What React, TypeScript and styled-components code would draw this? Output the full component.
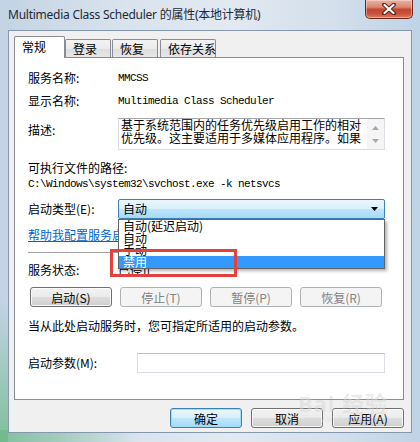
import React from 'react';
import styled, { createGlobalStyle, css } from 'styled-components';

const UI = `"Noto Sans CJK SC", "Noto Sans", sans-serif`;
const LATIN = `"Noto Sans", "Noto Sans CJK SC", sans-serif`;
const MONO = `"Liberation Mono", "Noto Sans CJK SC", monospace`;

const Global = createGlobalStyle`
  html, body { margin: 0; padding: 0; background: #fff; }
  body { width: 420px; height: 442px; overflow: hidden; }
  * { box-sizing: border-box; }
`;

const Window = styled.div`
  position: relative;
  width: 420px;
  height: 442px;
  display: flex;
  flex-direction: column;
  padding-bottom: 9px;
  background:
    linear-gradient(90deg, rgba(110, 185, 135, 0.75) 0px, rgba(110, 185, 135, 0) 140px) bottom / 100% 12px no-repeat,
    linear-gradient(180deg, rgba(110, 185, 135, 0) 300px, rgba(110, 185, 135, 0.8) 442px) left / 8px 100% no-repeat,
    linear-gradient(90deg, #c3d3e3 0%, #d9e3ee 30%, #e2e9f1 55%, #d3dfeb 80%, #bfd3e6 100%);
  font-family: ${UI};
  font-size: 12px;
  color: #000;
`;

const TitleBar = styled.div`
  height: 30px;
  display: flex;
  align-items: flex-start;
  justify-content: space-between;
  padding-left: 8px;
  padding-right: 7px;
`;

const TitleText = styled.div`
  font-family: ${LATIN};
  font-size: 12px;
  line-height: 16px;
  letter-spacing: -0.25px;
  margin-top: 7px;
  color: #1e2a36;
  white-space: nowrap;
`;

const CloseButton = styled.div`
  width: 48px;
  height: 19px;
  display: flex;
  align-items: center;
  justify-content: center;
  border: 1px solid #6b2a1f;
  border-top: none;
  border-radius: 0 0 5px 5px;
  background: linear-gradient(180deg, #eab1a3 0%, #dc8570 40%, #c5472e 52%, #c9503a 75%, #dd7d5e 100%);
  box-shadow: inset 0 0 0 1px rgba(255, 255, 255, 0.35);
`;

const Client = styled.div`
  flex: 1;
  margin: 0 8px;
  background: #f0f0f0;
  border: 1px solid #8497ad;
  display: flex;
  flex-direction: column;
  padding: 5px 0 0 5px;
`;

const TabStrip = styled.div`
  display: flex;
  align-items: flex-end;
  height: 21px;
`;

const Tab = styled.div<{ $active?: boolean; $w: number; $gap?: number }>`
  width: ${(p) => p.$w}px;
  margin-left: ${(p) => p.$gap ?? 0}px;
  border: 1px solid #898c95;
  border-bottom: none;
  border-radius: 2px 2px 0 0;
  padding-left: 7px;
  font-size: 12px;
  white-space: nowrap;
  ${(p) =>
    p.$active
      ? css`
          position: relative;
          z-index: 2;
          height: 22px;
          margin-bottom: -1px;
          background: #fff;
          line-height: 19px;
        `
      : css`
          height: 18px;
          background: linear-gradient(180deg, #f3f3f3 0%, #ebebeb 50%, #dedede 51%, #e6e6e6 100%);
          line-height: 18px;
        `}
`;

const Panel = styled.div`
  position: relative;
  z-index: 1;
  width: 390px;
  height: 343px;
  background: #fff;
  border: 1px solid #898c95;
  padding-left: 13px;
  display: flex;
  flex-direction: column;
`;

const Row = styled.div<{ $mt: number; $h?: number }>`
  display: flex;
  align-items: center;
  margin-top: ${(p) => p.$mt}px;
  height: ${(p) => p.$h ?? 16}px;
  line-height: 16px;
  white-space: nowrap;
`;

const Label = styled.div<{ $w?: number; $top?: boolean }>`
  width: ${(p) => p.$w ?? 90}px;
  flex: none;
  ${(p) => p.$top && css`align-self: flex-start; padding-top: 4px;`}
`;

const Mono = styled.div`
  font-family: ${MONO};
  font-size: 11px;
  letter-spacing: -0.6px;
`;

const TextBox = styled.div`
  width: 267px;
  height: 32px;
  display: flex;
  border: 1px solid #dadde4;
  border-top-color: #a3a6ad;
  background: #fff;
`;

const TextBoxBody = styled.div`
  flex: 1;
  padding: 0 0 0 2px;
  font-size: 12px;
  line-height: 12.5px;
  white-space: normal;
`;

const ScrollBar = styled.div`
  width: 17px;
  display: flex;
  flex-direction: column;
  align-items: center;
  justify-content: center;
  gap: 9px;
  background: #f5f5f5;
`;

const ComboWrap = styled.div`
  position: relative;
  width: 267px;
  height: 20px;
`;

const Combo = styled.div`
  height: 20px;
  border: 1px solid #3c7fb1;
  border-radius: 2px;
  background: linear-gradient(180deg, #eaf6fd 0%, #d9f0fc 50%, #bee6fd 51%, #a7d9f5 100%);
  display: flex;
  align-items: center;
  justify-content: space-between;
  padding: 0 6px 0 4px;
  line-height: 18px;
`;

const DropList = styled.div`
  position: absolute;
  left: 0;
  top: 20px;
  width: 267px;
  background: #fff;
  border: 1px solid #646464;
  box-shadow: 2px 2px 3px rgba(0, 0, 0, 0.3);
  z-index: 5;
`;

const DropItem = styled.div<{ $sel?: boolean }>`
  height: 12px;
  line-height: 12px;
  padding-left: 4px;
  font-size: 12px;
  ${(p) => p.$sel && css`background: #3399ff; color: #fff;`}
`;

const RedMark = styled.div`
  position: absolute;
  left: -8px;
  top: 50px;
  width: 127px;
  height: 28px;
  border: 3px solid #e2413e;
  z-index: 6;
`;

const Link = styled.div`
  color: #0066cc;
  text-decoration: underline;
`;

const Separator = styled.div<{ $mt: number }>`
  margin-top: ${(p) => p.$mt}px;
  width: 357px;
  height: 2px;
  border-top: 1px solid #a0a0a0;
  border-bottom: 1px solid #fff;
`;

const ButtonRow = styled.div<{ $mt: number }>`
  display: flex;
  gap: 8px;
  margin-top: ${(p) => p.$mt}px;
  padding-left: 2px;
`;

const Button = styled.div<{ $w: number; $disabled?: boolean; $default?: boolean }>`
  width: ${(p) => p.$w}px;
  height: 20px;
  flex: none;
  display: flex;
  align-items: center;
  justify-content: center;
  border-radius: 3px;
  font-size: 12px;
  border: 1px solid #707070;
  background: linear-gradient(180deg, #f2f2f2 0%, #ebebeb 48%, #dddddd 52%, #cfcfcf 100%);
  box-shadow: inset 0 0 0 1px rgba(255, 255, 255, 0.8);
  ${(p) =>
    p.$disabled &&
    css`
      border-color: #adb2b5;
      background: #f4f4f4;
      color: #838383;
      box-shadow: none;
    `}
  ${(p) =>
    p.$default &&
    css`
      border-color: #3c7fb1;
      background: linear-gradient(180deg, #eaf6fd 0%, #d9f0fc 48%, #bee6fd 52%, #a7d9f5 100%);
      box-shadow: inset 0 0 0 1px #a0dcf6;
    `}
`;

const Input = styled.div`
  width: 248px;
  height: 20px;
  border: 1px solid #dadde4;
  border-top-color: #b8bcc4;
  background: #fff;
`;

const Footer = styled.div`
  display: flex;
  justify-content: flex-end;
  gap: 9px;
  margin-top: 8px;
  padding-right: 7px;
`;

const Watermark = styled.div`
  position: absolute;
  left: 298px;
  top: 392px;
  display: flex;
  flex-direction: column;
  align-items: center;
  color: rgba(215, 215, 215, 0.5);
  pointer-events: none;
  z-index: 3;
`;

const WmBig = styled.div`
  font-family: ${LATIN};
  font-size: 22px;
  font-weight: 700;
  line-height: 22px;
  letter-spacing: 1px;
`;

const WmSmall = styled.div`
  font-family: ${LATIN};
  font-size: 9px;
  line-height: 10px;
`;

const ArrowUp = () => (
  <svg width="7" height="4" viewBox="0 0 7 4">
    <path d="M0 4 L3.5 0 L7 4 Z" fill="#a8a8a8" />
  </svg>
);
const ArrowDown = () => (
  <svg width="7" height="4" viewBox="0 0 7 4">
    <path d="M0 0 L3.5 4 L7 0 Z" fill="#a8a8a8" />
  </svg>
);

export default function App() {
  return (
    <>
      <Global />
      <Window>
        <TitleBar>
          <TitleText>Multimedia Class Scheduler 的属性(本地计算机)</TitleText>
          <CloseButton>
            <svg width="14" height="12" viewBox="0 0 14 12">
              <path d="M2 1.5 L12 10.5 M12 1.5 L2 10.5" stroke="#5a2418" strokeWidth="4" strokeLinecap="round" />
              <path d="M2.5 2 L11.5 10 M11.5 2 L2.5 10" stroke="#fff" strokeWidth="2.2" strokeLinecap="round" />
            </svg>
          </CloseButton>
        </TitleBar>
        <Client>
          <TabStrip>
            <Tab $active $w={51}>常规</Tab>
            <Tab $w={46}>登录</Tab>
            <Tab $w={46} $gap={1}>恢复</Tab>
            <Tab $w={56} $gap={2}>依存关系</Tab>
          </TabStrip>
          <Panel>
            <Row $mt={12}>
              <Label>服务名称:</Label>
              <Mono>MMCSS</Mono>
            </Row>
            <Row $mt={7}>
              <Label>显示名称:</Label>
              <Mono>Multimedia Class Scheduler</Mono>
            </Row>
            <Row $mt={9} $h={32}>
              <Label $top>描述:</Label>
              <TextBox>
                <TextBoxBody>
                  基于系统范围内的任务优先级启用工作的相对优先级。这主要适用于多媒体应用程序。如果
                </TextBoxBody>
                <ScrollBar>
                  <ArrowUp />
                  <ArrowDown />
                </ScrollBar>
              </TextBox>
            </Row>
            <Row $mt={10}>
              <Label $w={200}>可执行文件的路径:</Label>
            </Row>
            <Row $mt={0}>
              <Mono>C:\Windows\system32\svchost.exe -k netsvcs</Mono>
            </Row>
            <Row $mt={7} $h={20}>
              <Label>启动类型(E):</Label>
              <ComboWrap>
                <Combo>
                  <span>自动</span>
                  <svg width="7" height="4" viewBox="0 0 7 4">
                    <path d="M0 0 L3.5 4 L7 0 Z" fill="#000" />
                  </svg>
                </Combo>
                <DropList>
                  <DropItem>自动(延迟启动)</DropItem>
                  <DropItem>自动</DropItem>
                  <DropItem>手动</DropItem>
                  <DropItem $sel>禁用</DropItem>
                </DropList>
                <RedMark />
              </ComboWrap>
            </Row>
            <Row $mt={8}>
              <Link>帮助我配置服务启动选项。</Link>
            </Row>
            <Separator $mt={9} />
            <Row $mt={8}>
              <Label>服务状态:</Label>
              <span>已停止</span>
            </Row>
            <ButtonRow $mt={9}>
              <Button $w={82}>启动(S)</Button>
              <Button $w={82} $disabled>停止(T)</Button>
              <Button $w={82} $disabled>暂停(P)</Button>
              <Button $w={82} $disabled>恢复(R)</Button>
            </ButtonRow>
            <Row $mt={11}>当从此处启动服务时，您可指定所适用的启动参数。</Row>
            <Row $mt={19} $h={20}>
              <Label $w={109}>启动参数(M):</Label>
              <Input />
            </Row>
          </Panel>
          <Footer>
            <Button $w={72} $default>确定</Button>
            <Button $w={72}>取消</Button>
            <Button $w={72}>应用(A)</Button>
          </Footer>
        </Client>
        <Watermark>
          <WmBig>Bai 经验</WmBig>
          <WmSmall>jingyan.baidu.com</WmSmall>
        </Watermark>
      </Window>
    </>
  );
}
